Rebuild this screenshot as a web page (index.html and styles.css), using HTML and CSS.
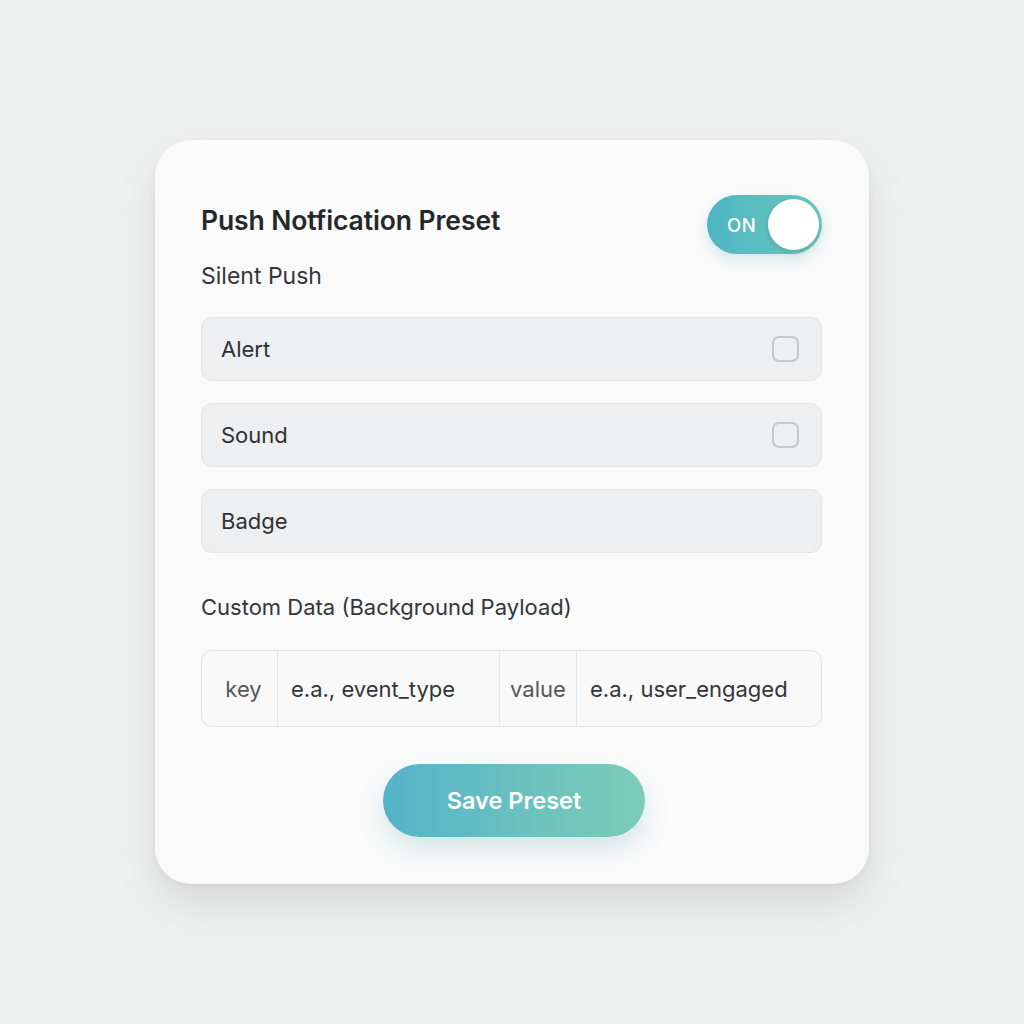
FILE: index.html
```html
<!DOCTYPE html>
<html>
<head>
<meta charset="utf-8">
<link rel="stylesheet" href="styles.css">
</head>
<body>
<div class="page">
  <div class="card">
    <div class="header">
      <h1 class="title">Push Notfication Preset</h1>
      <div class="toggle">
        <span class="toggle-label">ON</span>
        <span class="knob"></span>
      </div>
    </div>
    <div class="section-label">Silent Push</div>
    <div class="rows">
      <div class="row"><span>Alert</span><span class="check"></span></div>
      <div class="row"><span>Sound</span><span class="check"></span></div>
      <div class="row"><span>Badge</span></div>
    </div>
    <div class="section-label custom">Custom Data (Background Payload)</div>
    <div class="kv">
      <div class="kv-label key">key</div>
      <div class="kv-input">e.a., event_type</div>
      <div class="kv-label">value</div>
      <div class="kv-input">e.a., user_engaged</div>
    </div>
    <div class="actions">
      <button class="save">Save Preset</button>
    </div>
  </div>
</div>
</body>
</html>
```

FILE: styles.css
```css
* { box-sizing: border-box; }
html, body { margin: 0; padding: 0; }
body {
  background: #eff0f0;
  font-family: Inter, "Noto Sans", sans-serif;
  color: #2b2e31;
}
.page {
  width: 1024px;
  height: 1024px;
  padding-top: 140px;
  padding-left: 155px;
}
.card {
  width: 714px;
  height: 744px;
  background: #fafafa;
  border-radius: 36px;
  box-shadow: 0 20px 40px rgba(0,0,0,0.10), 0 2px 6px rgba(0,0,0,0.05);
  padding: 55px 47px 0 46px;
  display: flex;
  flex-direction: column;
}
.header {
  display: flex;
  justify-content: space-between;
  align-items: center;
  height: 59px;
}
.title {
  margin: 0 0 10px 0;
  font-size: 26.5px;
  font-weight: 600;
  color: #25282b;
  letter-spacing: -0.1px;
}
.toggle {
  width: 115px;
  height: 59px;
  border-radius: 30px;
  background: linear-gradient(90deg, #4db5c4, #6ccabb);
  display: flex;
  align-items: center;
  justify-content: space-between;
  padding: 0 3px 0 20px;
  box-shadow: 0 6px 14px rgba(60,160,170,0.2);
}
.toggle-label {
  color: #ffffff;
  font-size: 18.5px;
  font-weight: 500;
  letter-spacing: 0.5px;
}
.knob {
  width: 51px;
  height: 51px;
  border-radius: 50%;
  background: #ffffff;
  box-shadow: 0 2px 6px rgba(0,0,0,0.15);
}
.section-label {
  font-size: 23px;
  color: #33363a;
  margin-top: 6px;
  height: 32px;
  line-height: 32px;
}
.rows {
  display: flex;
  flex-direction: column;
  gap: 22px;
  margin-top: 25px;
}
.row {
  height: 64px;
  background: #eeeff0;
  border: 1.5px solid #e3e4e5;
  border-radius: 11px;
  display: flex;
  align-items: center;
  justify-content: space-between;
  padding: 0 22px 0 19px;
  font-size: 22px;
  color: #2f3235;
}
.check {
  width: 27px;
  height: 26px;
  border: 2.5px solid #c6c7c8;
  border-radius: 7px;
}
.custom {
  margin-top: 38px;
  font-size: 22px;
}
.kv {
  margin-top: 27px;
  height: 77px;
  border: 1.5px solid #e2e3e4;
  border-radius: 11px;
  display: grid;
  grid-template-columns: 76px 222px 77px 1fr;
  background: #f9f9f9;
}
.kv > div {
  display: flex;
  align-items: center;
  font-size: 22px;
}
.kv-label {
  justify-content: center;
  color: #55585b;
  border-right: 1.5px solid #e4e5e6;
}
.kv-label.key {
  padding-left: 8px;
}
.kv-input {
  padding-left: 13px;
  color: #33363a;
}
.kv-input:nth-child(2) {
  border-right: 1.5px solid #e4e5e6;
}
.actions {
  display: flex;
  justify-content: center;
  margin-top: 37px;
  padding-left: 5px;
}
.save {
  width: 262px;
  height: 73px;
  border: none;
  border-radius: 37px;
  background: linear-gradient(90deg, #55b3c9, #7ccdb7);
  color: #ffffff;
  font-family: Inter, "Noto Sans", sans-serif;
  font-size: 23.5px;
  font-weight: 600;
  box-shadow: 0 12px 24px rgba(70,150,160,0.2);
}
```
